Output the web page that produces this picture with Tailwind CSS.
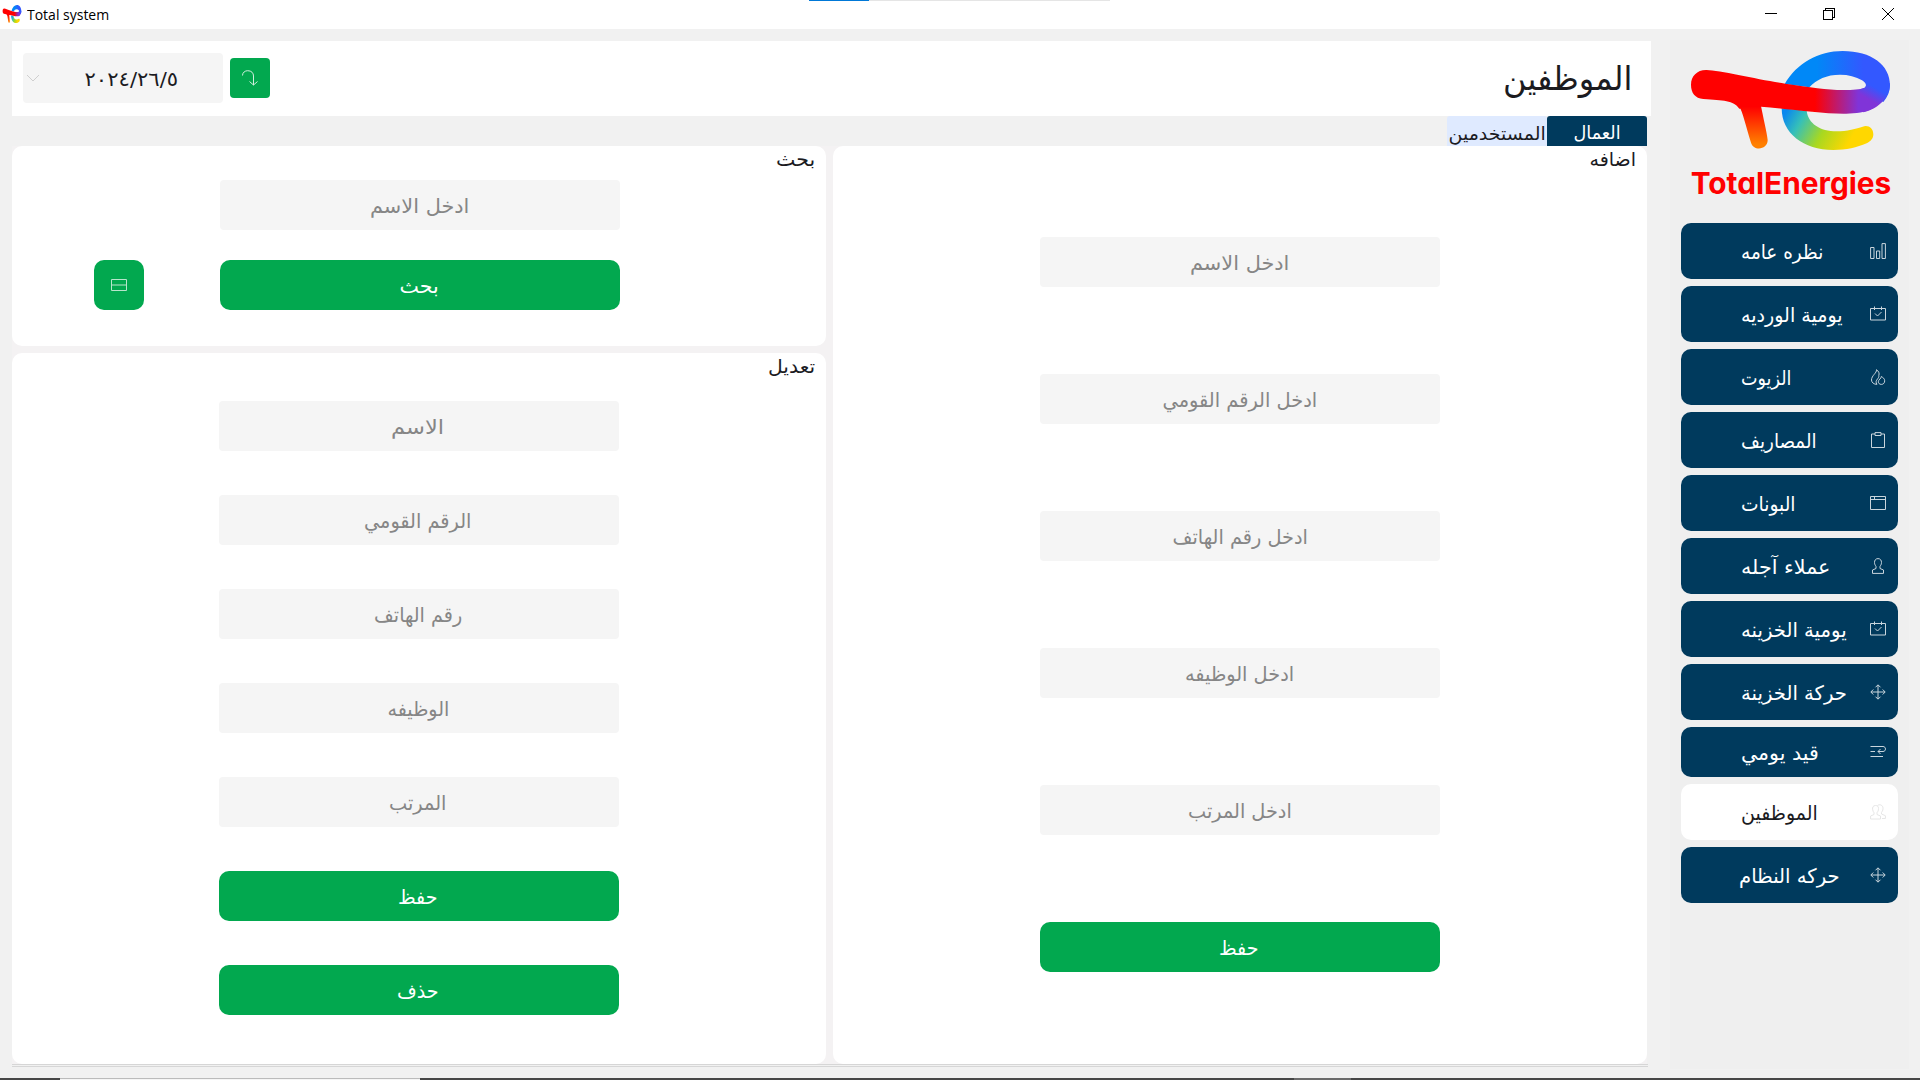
<!DOCTYPE html>
<html lang="ar">
<head>
<meta charset="utf-8">
<title>Total system</title>
<script src="https://cdn.jsdelivr.net/npm/@tailwindcss/browser@4"></script>
</head>
<body class="h-[1080px] w-[1920px] overflow-hidden bg-[#f1f1f1] font-['DejaVu_Sans',sans-serif] text-[20px] text-[#1b1b1f]">
<div class="relative flex h-full flex-col">
  <div class="absolute left-[809px] top-0 flex h-px w-[301px] bg-[#e5e5e5]"><i class="w-[60px] bg-[#0078d7]"></i></div>

  <header class="flex h-[29px] shrink-0 items-center bg-white pb-px text-black">
    <svg class="ml-0.5 size-5" viewBox="73 137 638 330"  preserveAspectRatio="none"><use href="#mark"/></svg>
    <span data-w="82" class="ml-[5px] inline-block origin-left whitespace-nowrap pt-px font-['Open_Sans',sans-serif] text-[14.5px] leading-5">Total system</span>
    <div class="ml-auto mr-[26px] flex items-center gap-[46px]">
      <svg class="mr-px size-3" viewBox="0 0 12 12" stroke="black" fill="none" shape-rendering="crispEdges"><path d="M0 5.500H12"/></svg>
      <svg class="-ml-px mr-px size-3" viewBox="0 0 12 12" stroke="black" fill="none" shape-rendering="crispEdges"><path d="M.5 2.500H9.500V11.500H.5ZM2.500 2V.5H11.500V9.500H10"/></svg>
      <svg class="size-3" viewBox="0 0 12 12" stroke="black" fill="none"><path d="M0 0L12 12M12 0L0 12"/></svg>
    </div>
  </header>

  <div class="flex min-h-0 flex-1 pl-3 pt-[11px]">
    <main class="flex w-[1639px] flex-col pt-px">
      <section class="flex h-[75px] shrink-0 items-center bg-white pb-px pl-[11px] pr-[19px]">
        <div class="flex h-[50px] w-[200px] items-center rounded-[4px] bg-[#f5f5f5] pl-1">
          <svg class="h-2 w-3" viewBox="0 0 12 8" fill="none" stroke="#cfcfcf" stroke-width="1"><path d="M0 1L6 7L12 1"/></svg>
          <span class="flex flex-1 justify-center pt-0.5"><span data-w="94" dir="ltr" class="inline-block whitespace-nowrap">&#x202D;٢٠٢٤/٢٦/٥&#x202C;</span></span>
        </div>
        <button class="ml-[7px] flex size-10 items-center justify-center rounded-[4px] bg-[#02a84f]">
          <svg class="size-4" viewBox="0 0 16 16" fill="none" stroke="#d0eedd" stroke-width="1"><path d="M.5 5.500C.5 2.500 3 .7 5.700 .7C9.500 .7 11.500 3 11.500 6V15M7.500 11.500L11.500 15L15.500 11.500"/></svg>
        </button>
        <h1 class="ml-auto pt-px text-[33px] leading-none"><span data-w="129" class="inline-block origin-right whitespace-nowrap">الموظفين</span></h1>
      </section>

      <nav dir="rtl" class="flex h-[30px] shrink-0 pr-1 text-[18px]">
        <a class="flex w-[100px] items-center justify-center rounded-t-[3px] bg-[#003a5d] pt-[3px] text-white"><span data-w="47" class="inline-block whitespace-nowrap">العمال</span></a>
        <a class="flex w-[100px] items-center justify-center rounded-t-[3px] bg-[#dfeaff] pt-[5px]"><span data-w="97" class="inline-block whitespace-nowrap">المستخدمين</span></a>
      </nav>

      <div class="flex h-[918px] w-[1635px] shrink-0 gap-[7px] bg-[#f4f2f3]">
        <div class="flex w-[814px] flex-col gap-[7px]">
          <section class="relative h-[200px] rounded-[10px] bg-white pt-[34px]">
            <h2 class="absolute right-[11px] top-0 text-[19px] leading-[26px]"><span data-w="39" class="inline-block origin-right">بحث</span></h2>
            <div class="flex flex-col items-center gap-[30px]">
              <div class="ml-0.5 flex h-[50px] w-[400px] items-center justify-center rounded-[4px] bg-[#f5f5f5] pt-px text-[#868686]"><span data-w="99" class="inline-block whitespace-nowrap">ادخل الاسم</span></div>
              <div class="flex w-full pl-[82px]">
                <button class="flex size-[50px] items-center justify-center rounded-[10px] bg-[#02a84f]">
                  <svg class="h-3 w-4" viewBox="0 0 16 12" fill="none" stroke="#b8e5cb"><path d="M.5 .5H15.500V11.500H.5ZM.5 6H15.500"/></svg>
                </button>
                <button class="ml-[76px] flex h-[50px] w-[400px] items-center justify-center rounded-[10px] bg-[#02a84f] pr-0.5 pt-0.5 text-white"><span data-w="39" class="inline-block">بحث</span></button>
              </div>
            </div>
          </section>
          <section class="relative flex flex-1 flex-col items-center gap-[44px] rounded-[10px] bg-white pt-[48px] text-[#868686]">
            <h2 class="absolute right-[11px] top-0 text-[19px] leading-[26px] text-[#1b1b1f]"><span data-w="47" class="inline-block origin-right">تعديل</span></h2>
            <div class="flex h-[50px] w-[400px] items-center justify-center rounded-[4px] bg-[#f5f5f5] pr-0.5 pt-px"><span data-w="53" class="inline-block whitespace-nowrap">الاسم</span></div>
            <div class="flex h-[50px] w-[400px] items-center justify-center rounded-[4px] bg-[#f5f5f5] pr-0.5 pt-px"><span data-w="107" class="inline-block whitespace-nowrap">الرقم القومي</span></div>
            <div class="flex h-[50px] w-[400px] items-center justify-center rounded-[4px] bg-[#f5f5f5] pr-0.5 pt-px"><span data-w="88" class="inline-block whitespace-nowrap">رقم الهاتف</span></div>
            <div class="flex h-[50px] w-[400px] items-center justify-center rounded-[4px] bg-[#f5f5f5] pr-0.5 pt-px"><span data-w="62" class="inline-block whitespace-nowrap">الوظيفه</span></div>
            <div class="flex h-[50px] w-[400px] items-center justify-center rounded-[4px] bg-[#f5f5f5] pr-0.5 pt-px"><span data-w="57" class="inline-block whitespace-nowrap">المرتب</span></div>
            <button class="flex h-[50px] w-[400px] items-center justify-center rounded-[10px] bg-[#02a84f] pr-0.5 pt-0.5 text-white"><span data-w="39" class="inline-block">حفظ</span></button>
            <button class="flex h-[50px] w-[400px] items-center justify-center rounded-[10px] bg-[#02a84f] pr-0.5 pt-0.5 text-white"><span data-w="42" class="inline-block">حذف</span></button>
          </section>
        </div>
        <section class="relative flex flex-1 flex-col items-center gap-[87px] rounded-[10px] bg-white pt-[91px] text-[#868686]">
          <h2 class="absolute right-[11px] top-0 text-[19px] leading-[26px] text-[#1b1b1f]"><span data-w="46" class="inline-block origin-right">اضافه</span></h2>
          <div class="flex h-[50px] w-[400px] items-center justify-center rounded-[4px] bg-[#f5f5f5] pt-px"><span data-w="99" class="inline-block whitespace-nowrap">ادخل الاسم</span></div>
          <div class="flex h-[50px] w-[400px] items-center justify-center rounded-[4px] bg-[#f5f5f5] pt-px"><span data-w="155" class="inline-block whitespace-nowrap">ادخل الرقم القومي</span></div>
          <div class="flex h-[50px] w-[400px] items-center justify-center rounded-[4px] bg-[#f5f5f5] pt-px"><span data-w="135" class="inline-block whitespace-nowrap">ادخل رقم الهاتف</span></div>
          <div class="flex h-[50px] w-[400px] items-center justify-center rounded-[4px] bg-[#f5f5f5] pt-px"><span data-w="109" class="inline-block whitespace-nowrap">ادخل الوظيفه</span></div>
          <div class="flex h-[50px] w-[400px] items-center justify-center rounded-[4px] bg-[#f5f5f5] pt-px"><span data-w="104" class="inline-block whitespace-nowrap">ادخل المرتب</span></div>
          <button class="flex h-[50px] w-[400px] items-center justify-center rounded-[10px] bg-[#02a84f] pr-0.5 pt-0.5 text-white"><span data-w="39" class="inline-block">حفظ</span></button>
        </section>
      </div>
      <div class="h-[3px] w-[1636px] shrink-0 border-y border-[#d6d6d6]"></div>
    </main>

    <aside class="ml-[19px] flex h-[1029px] w-[239px] flex-col items-center bg-[#efefef]">
      <svg class="h-[165px] w-[239px] shrink-0" viewBox="30 120 717 495">
        <defs>
          <linearGradient id="blue" gradientUnits="userSpaceOnUse" x1="470" y1="0" x2="610" y2="0"><stop stop-color="#0088f7"/><stop offset="1" stop-color="#3358ff"/></linearGradient>
          <linearGradient id="band" gradientUnits="userSpaceOnUse" x1="465" y1="0" x2="595" y2="0"><stop stop-color="#f00"/><stop offset="1" stop-color="#8034d8"/></linearGradient>
          <linearGradient id="turn" gradientUnits="userSpaceOnUse" x1="655" y1="268" x2="635" y2="303"><stop stop-color="#3358ff"/><stop offset="1" stop-color="#8034d8"/></linearGradient>
          <linearGradient id="leg" gradientUnits="userSpaceOnUse" x1="0" y1="320" x2="0" y2="432"><stop stop-color="#f00"/><stop offset="1" stop-color="#ff8000"/></linearGradient>
          <linearGradient id="tail" gradientUnits="userSpaceOnUse" x1="378" y1="336" x2="560" y2="440"><stop stop-color="#0a88ee"/><stop offset=".25" stop-color="#36c0b8"/><stop offset=".6" stop-color="#a8d820"/><stop offset="1" stop-color="#ffd700"/></linearGradient>
          <g id="mark">
            <path fill="url(#tail)" d="M365 325L440 332C444 370 480 394 530 394C560 394 590 386 608 380C625 374 640 385 640 403C640 416 632 424 620 430C590 443 560 450 520 450C430 450 365 400 365 325Z"/>
            <path fill="url(#blue)" d="M374 252C410 190 475 153 548 153C635 153 690 195 690 256C690 275 683 291 670 306L606 268C622 262 622 250 606 241C588 230 565 224 540 224C500 224 470 238 448 262Z"/>
            <path fill="url(#band)" d="M93 254C93 228 112 209 140 210C180 211 300 240 376 251C450 261 500 270 550 270C580 270 600 269 612 264L630 270L640 325C615 338 580 342 550 341C480 341 380 326 303 320L238 326C220 300 190 302 130 297C105 295 93 278 93 254Z"/>
            <path fill="url(#turn)" d="M600 268C612 266 619 261 619 256L690 250C690 290 660 325 610 337L595 305Z"/>
            <path fill="url(#leg)" d="M237 318C248 335 258 380 273 428C280 454 323 450 323 420C321 400 309 350 303 318Z"/>
          </g>
        </defs>
        <use href="#mark"/>
        <text x="92" y="581" textLength="602" lengthAdjust="spacingAndGlyphs" fill="#f00" class="font-['Inter',sans-serif] text-[91px] font-bold [font-feature-settings:'cv11']">TotalEnergies</text>
      </svg>
      <nav class="mt-[18px] flex w-[217px] flex-col gap-[7px] text-white">
        <a class="flex h-14 items-center rounded-[10px] bg-[#003a5d] pl-[60px] pr-3"><span data-w="82" class="inline-block origin-left whitespace-nowrap pt-px">نظره عامه</span>
          <svg class="ml-auto size-4" viewBox="0 0 16 16" fill="none" stroke="#c9d5dd"><path d="M.6 4.500H4V15.500H.6ZM6.500 8H9.700V15.500H6.500ZM12 .6H15.400V15.500H12Z"/></svg></a>
        <a class="flex h-14 items-center rounded-[10px] bg-[#003a5d] pl-[60px] pr-3"><span data-w="102" class="inline-block origin-left whitespace-nowrap pt-px">يومية الورديه</span>
          <svg class="ml-auto size-4" viewBox="0 0 16 16" fill="none" stroke="#c9d5dd"><path d="M.5 2.500H15.500V14H.5ZM4.500 .5V4M11.500 .5V4M5 7.500L7.500 10L11.500 6"/></svg></a>
        <a class="flex h-14 items-center rounded-[10px] bg-[#003a5d] pl-[60px] pr-3"><span data-w="50" class="inline-block origin-left whitespace-nowrap pt-px">الزيوت</span>
          <svg class="ml-auto size-4" viewBox="0 0 16 16" fill="none" stroke="#c9d5dd"><path d="M6.500 .7C7 4 1.500 6.500 1.500 11C1.500 13.500 4 15.500 7 15.300C5.500 13.500 6 11.500 7.500 10C8.500 8.800 9 8 8.800 6.500M8.800 6.500C9.800 4.500 8.500 2 6.500 .7M11.300 7.500C11.500 9.500 8.300 10.500 8.300 12.800C8.300 14.200 9.500 15.400 11.300 15.400C13.500 15.400 14.700 13.800 14.700 11.800C14.700 9.500 12.800 8.500 11.300 7.500"/></svg></a>
        <a class="flex h-14 items-center rounded-[10px] bg-[#003a5d] pl-[60px] pr-3"><span data-w="76" class="inline-block origin-left whitespace-nowrap pt-px">المصاريف</span>
          <svg class="ml-auto size-4" viewBox="0 0 16 16" fill="none" stroke="#c9d5dd"><path d="M5 2H1.500V15.500H14.500V2H11M5 .6H11V3.500H5Z"/></svg></a>
        <a class="flex h-14 items-center rounded-[10px] bg-[#003a5d] pl-[60px] pr-3"><span data-w="55" class="inline-block origin-left whitespace-nowrap pt-px">البونات</span>
          <svg class="ml-auto size-4" viewBox="0 0 16 16" fill="none" stroke="#c9d5dd"><path d="M.5 1.500H15.500V14.500H.5ZM.5 4.500H15.500M4.500 1.500V4.500"/></svg></a>
        <a class="flex h-14 items-center rounded-[10px] bg-[#003a5d] pl-[60px] pr-3"><span data-w="89" class="inline-block origin-left whitespace-nowrap pt-px">عملاء آجله</span>
          <svg class="ml-auto size-4" viewBox="0 0 16 16" fill="none" stroke="#c9d5dd"><path d="M8 .6C5.500 .6 4.500 2.500 4.500 4.500C4.500 6.500 5.500 7.500 6 8.500V10.500L2.500 12V15.400H13.500V12L10 10.500V8.500C10.500 7.500 11.500 6.500 11.500 4.500C11.500 2.500 10.500 .6 8 .6Z"/></svg></a>
        <a class="flex h-14 items-center rounded-[10px] bg-[#003a5d] pl-[60px] pr-3"><span data-w="106" class="inline-block origin-left whitespace-nowrap pt-px">يومية الخزينه</span>
          <svg class="ml-auto size-4" viewBox="0 0 16 16" fill="none" stroke="#c9d5dd"><path d="M.5 2.500H15.500V14H.5ZM4.500 .5V4M11.500 .5V4M5 7.500L7.500 10L11.500 6"/></svg></a>
        <a class="flex h-14 items-center rounded-[10px] bg-[#003a5d] pl-[60px] pr-3"><span data-w="106" class="inline-block origin-left whitespace-nowrap pt-px">حركة الخزينة</span>
          <svg class="ml-auto size-4" viewBox="0 0 16 16" fill="none" stroke="#c9d5dd"><path d="M8 1V15M1 8H15M5.500 3.300L8 .8L10.500 3.300M5.500 12.700L8 15.200L10.500 12.700M3.300 5.500L.8 8L3.300 10.500M12.700 5.500L15.200 8L12.700 10.500"/></svg></a>
        <a class="flex h-[50px] items-center rounded-[10px] bg-[#003a5d] pl-[60px] pr-3"><span data-w="78" class="inline-block origin-left whitespace-nowrap pt-px">قيد يومي</span>
          <svg class="ml-auto size-4" viewBox="0 0 16 16" fill="none" stroke="#c9d5dd"><path d="M.5 2.500H13C16.300 2.500 16.300 7.500 13 7.500H8M.5 7.500H5M.5 12.500H13M10.500 5L8 7.500L10.500 10"/></svg></a>
        <a class="flex h-14 items-center rounded-[10px] bg-white pl-[60px] pr-3 text-[#1b1b1f]"><span data-w="77" class="inline-block origin-left whitespace-nowrap pt-px">الموظفين</span>
          <svg class="ml-auto size-4" viewBox="0 0 16 16" fill="none" stroke="#e6e6e6"><path d="M5.500 1.500C3 1.500 2.300 3.500 2.600 5.500C2.800 7 3.500 8 4 8.700V10.500L.6 12V15H10.500V12L7 10.500V8.700C8 7.500 8.500 6.500 8.500 4.500C8.500 2.500 7.500 1.500 5.500 1.500ZM7.500 1.500C9.500 0 13 .8 13 4.500C13 6.500 12 7.500 11.500 8.500V10L15.400 11.700V14.500H12"/></svg></a>
        <a class="flex h-14 items-center rounded-[10px] bg-[#003a5d] pl-[58px] pr-3"><span data-w="101" class="inline-block origin-left whitespace-nowrap pt-px">حركه النظام</span>
          <svg class="ml-auto size-4" viewBox="0 0 16 16" fill="none" stroke="#c9d5dd"><path d="M8 1V15M1 8H15M5.500 3.300L8 .8L10.500 3.300M5.500 12.700L8 15.200L10.500 12.700M3.300 5.500L.8 8L3.300 10.500M12.700 5.500L15.200 8L12.700 10.500"/></svg></a>
      </nav>
    </aside>
  </div>

  <footer class="flex h-0.5 shrink-0 bg-[#474747] pl-[60px]">
    <i class="w-[360px] border-t border-[#bbbbbb] bg-[#f5f5f5]"></i>
    <i class="ml-[874px] w-[57px] bg-[#6b6b6b]"></i>
  </footer>
</div>
<script>
  // Condense or widen each label to its design width, whenever its own width changes.
  var fit = new ResizeObserver(function (entries) {
    entries.forEach(function (entry) {
      var el = entry.target;
      el.style.transform = 'scaleX(' + (el.dataset.w / el.offsetWidth) + ')';
    });
  });
  document.querySelectorAll('[data-w]').forEach(function (el) { fit.observe(el); });
</script>
</body>
</html>
